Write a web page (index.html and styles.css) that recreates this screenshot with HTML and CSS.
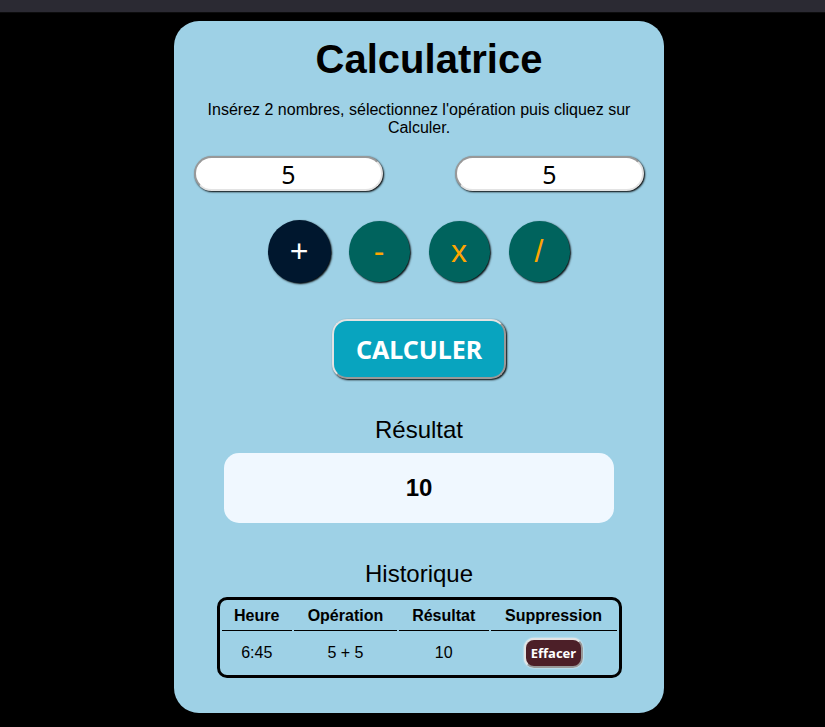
FILE: index.html
```html
<!DOCTYPE html>
<html lang="fr">
<head>
<meta charset="utf-8">
<meta name="viewport" content="width=device-width, initial-scale=1">
<title>Calculatrice</title>
<link rel="stylesheet" href="styles.css">
</head>
<body>
<div class="topbar"></div>
<main class="page">
  <form class="card" onsubmit="return false">
    <h1 class="title">Calculatrice</h1>
    <p class="intro">Insérez 2 nombres, sélectionnez l'opération puis cliquez sur Calculer.</p>
    <div class="numbers">
      <input class="number" type="text" inputmode="decimal" value="5" aria-label="Premier nombre">
      <input class="number" type="text" inputmode="decimal" value="5" aria-label="Second nombre">
    </div>
    <div class="operators">
      <button class="operator selected" type="button">+</button>
      <button class="operator" type="button">-</button>
      <button class="operator" type="button">x</button>
      <button class="operator" type="button">/</button>
    </div>
    <button class="calculate" type="submit">CALCULER</button>
    <h2 class="subtitle">Résultat</h2>
    <output class="result">10</output>
    <h2 class="subtitle">Historique</h2>
    <table class="history">
      <thead>
        <tr><th>Heure</th><th>Opération</th><th>Résultat</th><th>Suppression</th></tr>
      </thead>
      <tbody>
        <tr><td>6:45</td><td>5 + 5</td><td>10</td><td><button class="delete" type="button">Effacer</button></td></tr>
      </tbody>
    </table>
  </form>
</main>
</body>
</html>
```
FILE: styles.css
```css
* {
  box-sizing: border-box;
}

body {
  margin: 0;
  background: #000;
  color: #000;
  font-family: "Liberation Sans", Arial, sans-serif;
  font-size: 16px;
}

.topbar {
  height: 13px;
  background: #2b2a33;
  border-bottom: 1px solid #0c0c0d;
}

.page {
  padding: 8px 0 14px 13px;
}

.card {
  display: flex;
  flex-direction: column;
  align-items: center;
  max-width: 490px;
  margin: 0 auto;
  padding: 15px 20px 35px;
  border-radius: 25px;
  background: #9ed1e6;
  text-align: center;
}

.title {
  margin: 0;
  padding-left: 20px;
  font-size: 40px;
  line-height: 46px;
}

.intro {
  margin: 19px 0;
  line-height: 18px;
}

.numbers {
  display: flex;
  justify-content: space-between;
  width: 100%;
}

.number {
  width: 42%;
  height: 35px;
  padding: 0;
  border: 2px solid;
  border-color: #999 #e3e3e3 #e3e3e3 #999;
  border-radius: 18px;
  background: #fff;
  box-shadow: 1px 1px 2px #000;
  color: #000;
  font-family: "Noto Sans", sans-serif;
  font-size: 25px;
  text-align: center;
}

.operators {
  display: grid;
  grid-template-columns: repeat(4, 80px);
  place-items: center;
  height: 64px;
  margin-top: 28px;
}

.operator {
  width: 61px;
  height: 61px;
  padding: 0;
  border: 0;
  border-radius: 50%;
  background: #00635d;
  box-shadow: 1px 1px 2px #000;
  color: orange;
  font-family: "Liberation Sans", Arial, sans-serif;
  font-size: 32px;
}

.operator.selected {
  width: 63px;
  height: 63px;
  background: #00172e;
  color: #fff;
}

.calculate {
  height: 60px;
  margin: 36px 0 37px;
  padding: 0 22px;
  border: 2px solid;
  border-color: #e3e3e3 #999 #999 #e3e3e3;
  border-radius: 15px;
  background: #08a4bf;
  box-shadow: 1px 1px 2px #000;
  color: #fff;
  font-family: "Noto Sans", sans-serif;
  font-size: 25px;
  font-weight: 700;
}

.subtitle {
  margin: 0 0 9px;
  font-size: 24px;
  font-weight: 400;
  line-height: 28px;
}

.result {
  width: 390px;
  max-width: 100%;
  margin-bottom: 37px;
  border-radius: 15px;
  background: #f0f8ff;
  font-size: 24px;
  font-weight: 700;
  line-height: 70px;
}

.history {
  width: 405px;
  max-width: 100%;
  border: 3px solid #000;
  border-radius: 10px;
  border-spacing: 2px;
}

.history th {
  height: 29px;
  padding: 4px 10px;
  border-bottom: 1px solid #000;
}

.history td {
  height: 40px;
  padding: 0 10px;
}

.delete {
  height: 30px;
  padding: 0 5px;
  border: 2px solid;
  border-color: #e3e3e3 #999 #999 #e3e3e3;
  border-radius: 10px;
  background: #4c1f28;
  box-shadow: 0 0 2px #fff;
  color: #fff;
  font-family: "Noto Sans", sans-serif;
  font-size: 13px;
  font-weight: 700;
}
```
